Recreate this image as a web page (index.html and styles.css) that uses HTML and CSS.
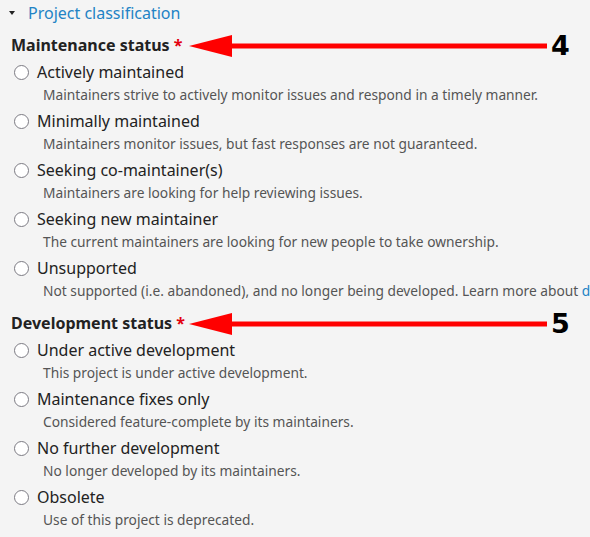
FILE: index.html
```html
<!DOCTYPE html>
<html lang="en">
<head>
    <meta charset="UTF-8">
    <meta name="viewport" content="width=device-width, initial-scale=1.0">
    <title>Project classification</title>
    <link rel="stylesheet" href="styles.css">
</head>
<body>
    <div class="page">
        <div class="summary">
            <span class="caret"></span>
            <span class="summary-title">Project classification</span>
        </div>

        <div class="fieldset">
            <div class="legend">
                Maintenance status <span class="required">*</span>
                <span class="annot">
                    <svg width="362" height="24" viewBox="0 0 362 24">
                        <polygon points="0,12 43,1 43,23" fill="#ff0000"/>
                        <rect x="42" y="9.5" width="316" height="5" fill="#ff0000"/>
                    </svg>
                    <span class="annot-num">4</span>
                </span>
            </div>

            <div class="option">
                <label class="option-label"><input type="radio" name="maint"> Actively maintained</label>
                <div class="option-desc">Maintainers strive to actively monitor issues and respond in a timely manner.</div>
            </div>
            <div class="option">
                <label class="option-label"><input type="radio" name="maint"> Minimally maintained</label>
                <div class="option-desc">Maintainers monitor issues, but fast responses are not guaranteed.</div>
            </div>
            <div class="option">
                <label class="option-label"><input type="radio" name="maint"> Seeking co-maintainer(s)</label>
                <div class="option-desc">Maintainers are looking for help reviewing issues.</div>
            </div>
            <div class="option">
                <label class="option-label"><input type="radio" name="maint"> Seeking new maintainer</label>
                <div class="option-desc">The current maintainers are looking for new people to take ownership.</div>
            </div>
            <div class="option">
                <label class="option-label"><input type="radio" name="maint"> Unsupported</label>
                <div class="option-desc">Not supported (i.e. abandoned), and no longer being developed. Learn more about <a href="#">d</a></div>
            </div>
        </div>

        <div class="fieldset">
            <div class="legend">
                Development status <span class="required">*</span>
                <span class="annot">
                    <svg width="362" height="24" viewBox="0 0 362 24">
                        <polygon points="0,12 43,1 43,23" fill="#ff0000"/>
                        <rect x="42" y="9.5" width="316" height="5" fill="#ff0000"/>
                    </svg>
                    <span class="annot-num">5</span>
                </span>
            </div>

            <div class="option">
                <label class="option-label"><input type="radio" name="dev"> Under active development</label>
                <div class="option-desc">This project is under active development.</div>
            </div>
            <div class="option">
                <label class="option-label"><input type="radio" name="dev"> Maintenance fixes only</label>
                <div class="option-desc">Considered feature-complete by its maintainers.</div>
            </div>
            <div class="option">
                <label class="option-label"><input type="radio" name="dev"> No further development</label>
                <div class="option-desc">No longer developed by its maintainers.</div>
            </div>
            <div class="option">
                <label class="option-label"><input type="radio" name="dev"> Obsolete</label>
                <div class="option-desc">Use of this project is deprecated.</div>
            </div>
        </div>
    </div>
</body>
</html>
```

FILE: styles.css
```css
body {
    margin: 0;
    background: #f4f4f4;
    font-family: "Noto Sans", "Open Sans", sans-serif;
    color: #222;
    overflow: hidden;
}

.page {
    padding: 0 0 0 11px;
    white-space: nowrap;
}

.summary {
    display: flex;
    align-items: center;
    height: 26px;
}

.caret {
    width: 0;
    height: 0;
    margin-left: -2px;
    border-left: 3px solid transparent;
    border-right: 3px solid transparent;
    border-top: 4px solid #222;
}

.summary-title {
    margin-left: 13px;
    font-size: 16px;
    color: #2283c5;
}

.fieldset {
    margin-top: 8px;
}

.fieldset + .fieldset {
    margin-top: 6px;
}

.legend {
    position: relative;
    font-size: 16px;
    font-weight: bold;
    line-height: 22px;
    margin-bottom: 5px;
}

.required {
    color: #e3000f;
}

.annot {
    position: absolute;
    left: 178px;
    top: 0;
    display: flex;
    align-items: center;
    height: 24px;
}

.annot-num {
    margin-left: 0;
    font-family: "DejaVu Sans", sans-serif;
    font-size: 27px;
    font-weight: bold;
    color: #000;
    line-height: 24px;
}

.option {
    padding-bottom: 6px;
}

.option-label {
    display: flex;
    align-items: center;
    font-size: 16px;
    line-height: 22px;
    height: 22px;
}

.option-label input {
    appearance: none;
    width: 15px;
    height: 15px;
    margin: 0 8px 0 3px;
    border: 1.5px solid #7c7b83;
    border-radius: 50%;
    background: #fff;
    box-sizing: border-box;
}

.option-desc {
    margin: 3px 0 0 32px;
    font-size: 13.75px;
    line-height: 18px;
    color: #555;
}

.option-desc a {
    color: #2283c5;
    text-decoration: none;
}
```
